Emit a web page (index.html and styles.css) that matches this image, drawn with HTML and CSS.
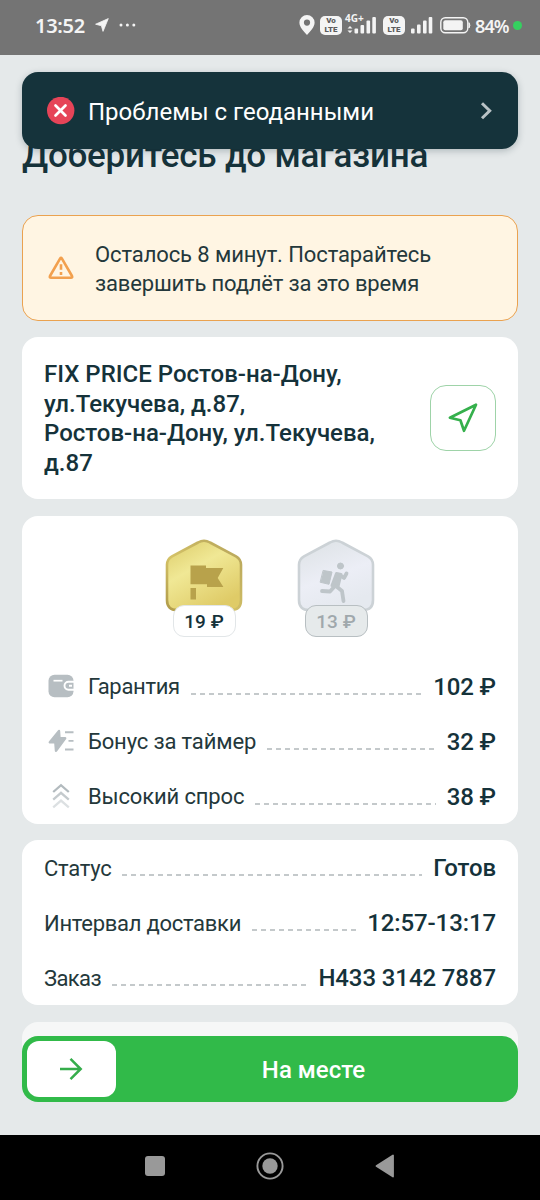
FILE: index.html
```html
<!DOCTYPE html>
<html lang="ru">
<head>
<meta charset="utf-8">
<title>Доберитесь до магазина</title>
<link rel="stylesheet" href="styles.css">
</head>
<body>
<div class="screen">
  <header class="status">
    <span class="clock">13:52</span>
    <svg class="nav-arrow" width="14" height="14" viewBox="0 0 14 14"><path d="M13.3.6.6 6.2l5.8 1.6L8 13.4z" fill="#f4f4f4" stroke="#f4f4f4" stroke-width=".8" stroke-linejoin="round"/></svg>
    <svg class="dots" width="17" height="4" viewBox="0 0 17 4" fill="#f4f4f4"><circle cx="2" cy="2" r="1.5"/><circle cx="8.4" cy="2" r="1.5"/><circle cx="14.8" cy="2" r="1.5"/></svg>
    <div class="status-icons">
      <svg width="16" height="20" viewBox="0 0 16 20"><path fill="#f4f4f4" fill-rule="evenodd" d="M8 0a7.6 7.6 0 0 1 7.6 7.6C15.6 12 11.500 16.500 8 20 4.500 16.500.4 12 .4 7.600A7.600 7.600 0 0 1 8 0zm0 4.500a3.100 3.100 0 1 0 0 6.200 3.100 3.100 0 0 0 0-6.200z"/></svg>
      <span class="volte first"><span>Vo</span><span>LTE</span></span>
      <span class="lte4g"><span class="g4">4G+</span>
        <svg width="32" height="20" viewBox="0 0 32 20" fill="#f4f4f4"><path d="M2.500 13.500 5 11l2.500 2.500zM2.500 15.500h5L5 18z"/><rect x="9.500" y="13.500" width="3.600" height="5" rx="1"/><rect x="15.500" y="10" width="3.600" height="8.500" rx="1"/><rect x="21.500" y="5.500" width="3.600" height="13" rx="1"/><rect x="27.300" y="2" width="3.600" height="16.500" rx="1"/></svg>
      </span>
      <span class="volte second"><span>Vo</span><span>LTE</span></span>
      <svg class="bars" width="22" height="20" viewBox="0 0 22 20" fill="#f4f4f4"><rect x="0" y="13.500" width="3.600" height="5" rx="1"/><rect x="6" y="9.500" width="3.600" height="9" rx="1"/><rect x="12" y="5.500" width="3.600" height="13" rx="1"/><rect x="17.700" y="2" width="3.600" height="16.500" rx="1"/></svg>
      <svg class="battery" width="31" height="17" viewBox="0 0 31 17"><rect x=".8" y=".8" width="27" height="15" rx="4.500" fill="none" stroke="#f4f4f4" stroke-width="1.400"/><rect x="3.300" y="3.300" width="19.500" height="10" rx="2" fill="#f4f4f4"/><path d="M29 5.700q1.800 2.600 0 5.200z" fill="#f4f4f4" stroke="#f4f4f4"/></svg>
      <span class="percent">84%</span>
      <span class="live"></span>
    </div>
  </header>

  <div class="toast">
    <svg width="28" height="28" viewBox="0 0 28 28"><circle cx="13.700" cy="13.500" r="13.700" fill="#e64458"/><path d="m8.500 8.500 10 10M18.500 8.500l-10 10" stroke="#fff" stroke-width="2.700" stroke-linecap="round"/></svg>
    <span class="toast-text">Проблемы с геоданными</span>
    <svg class="chevron" width="12" height="18" viewBox="0 0 12 18"><path d="m2 1.300 7.700 7.500L2 16.300" fill="none" stroke="#b9c3c6" stroke-width="3"/></svg>
  </div>

  <main class="content">
    <h1 class="title">Доберитесь до магазина</h1>

    <section class="warning">
      <svg width="28" height="26" viewBox="0 0 28 26"><path d="M14.800 3.400 25 21q.8 1.700-1.100 1.700H4.100Q2.200 22.700 3 21L13.200 3.400q.8-1.300 1.600 0z" fill="none" stroke="#f2a04e" stroke-width="2.600" stroke-linejoin="round"/><path d="M14 9.300v5.500M14 16.900v3" stroke="#f2a04e" stroke-width="2.600"/></svg>
      <p class="warning-text"><span class="w1">Осталось 8 минут. Постарайтесь</span><br><span class="w2">завершить подлёт за это время</span></p>
    </section>

    <section class="card address">
      <p class="address-text">FIX PRICE Ростов-на-Дону,<br>ул.Текучева, д.87,<br>Ростов-на-Дону, ул.Текучева,<br>д.87</p>
      <div class="route">
        <svg width="32" height="32" viewBox="0 0 32 32"><path d="M29 2.700 2.900 15.700l10.500 2.600 3.600 10.500z" fill="none" stroke="#35b04c" stroke-width="2.700" stroke-linejoin="round"/></svg>
      </div>
    </section>

    <section class="card pay">
      <div class="badges">
        <div class="badge">
          <svg width="78" height="74" viewBox="0 0 78 74">
            <defs><linearGradient id="gold" x1="0" y1="0" x2=".6" y2="1"><stop offset="0" stop-color="#dccb68"/><stop offset=".45" stop-color="#f0e895"/><stop offset="1" stop-color="#dfcb67"/></linearGradient>
            <linearGradient id="goldEdge" x1="0" y1="1" x2="1" y2="0"><stop offset="0" stop-color="#b09b4a"/><stop offset=".4" stop-color="#d4c267"/><stop offset="1" stop-color="#b5a35a"/></linearGradient></defs>
            <path d="M33 3.500q6-3.500 12 0L71 17.300q5 2.900 5 8.500V61q0 10-10 10H12Q2 71 2 61V25.800q0-5.600 5-8.500z" fill="url(#gold)" stroke="url(#goldEdge)" stroke-width="2.600"/>
            <path d="M25.500 26.500h15.500v2.500h17.300l-5.600 10 5.700 9H42v-2.700H25.500zM25.500 49h5.500v11.500h-5.500z" fill="#b8a24b"/>
          </svg>
          <span class="price">19 ₽</span>
        </div>
        <div class="badge">
          <svg width="78" height="74" viewBox="0 0 78 74">
            <defs><linearGradient id="silver" x1="0" y1="0" x2=".4" y2="1"><stop offset="0" stop-color="#dce1e4"/><stop offset=".6" stop-color="#eceef6"/><stop offset="1" stop-color="#e5e9ef"/></linearGradient></defs>
            <path d="M33 3.500q6-3.500 12 0L71 17.300q5 2.900 5 8.500V61q0 10-10 10H12Q2 71 2 61V25.800q0-5.600 5-8.500z" fill="url(#silver)" stroke="#ccd2d6" stroke-width="2.600"/>
            <g fill="#bec5c9" stroke="#bec5c9" stroke-linejoin="round" stroke-linecap="round"><path d="m26.500 31.500 8.500 1.500-3 12.300-8.500-2z"/><circle cx="43.500" cy="27" r="3"/><path d="m39.500 34.500 4.500 1-3 12-6-1z" stroke-width="3"/><path d="m43.500 36.500 3.500 2.500 2.500-4.500M37.500 47.500l-4.500 5-8-.5M39.500 47.500l5.500 4.500 1.500 10" fill="none" stroke-width="3.800"/></g>
          </svg>
          <span class="price muted">13 ₽</span>
        </div>
      </div>
      <div class="row">
        <span class="icon"><svg width="26" height="24" viewBox="0 0 26 24"><rect x=".5" y=".7" width="25" height="22.600" rx="6" fill="#b7bec2"/><path d="M5.500 6.700h9" stroke="#fff" stroke-width="1.700"/><path d="M26 7.800h-5.500a4 4 0 0 0 0 8H26M21 11.800h3" fill="none" stroke="#fff" stroke-width="1.900"/></svg></span>
        <span class="label l1">Гарантия</span><span class="leader"></span><span class="value">102 ₽</span>
      </div>
      <div class="row">
        <span class="icon"><svg width="26" height="24" viewBox="0 0 26 24"><path d="M11 2 1.800 13.200h5.500L8 21.800l9.200-12.600h-5.700z" fill="#b7bec2" stroke="#b7bec2" stroke-width="2.400" stroke-linejoin="round"/><path d="M17 3.300h8.500M20.500 11.900h5M17 20.500h8.500" stroke="#b7bec2" stroke-width="1.900"/></svg></span>
        <span class="label l2">Бонус за таймер</span><span class="leader"></span><span class="value">32 ₽</span>
      </div>
      <div class="row">
        <span class="icon"><svg width="26" height="26" viewBox="0 0 26 26" fill="none" stroke-width="2.300"><path d="m5.200 9 7.800-6.800L20.800 9" stroke="#b2babe"/><path d="M5.200 16.700 13 9.900l7.800 6.800" stroke="#c4cacd"/><path d="m5.200 24.400 7.800-6.800 7.800 6.800" stroke="#dce0e2"/></svg></span>
        <span class="label l3">Высокий спрос</span><span class="leader"></span><span class="value">38 ₽</span>
      </div>
    </section>

    <section class="card order">
      <div class="row"><span class="label l4">Статус</span><span class="leader"></span><span class="value">Готов</span></div>
      <div class="row"><span class="label l5">Интервал доставки</span><span class="leader"></span><span class="value">12:57-13:17</span></div>
      <div class="row"><span class="label l6">Заказ</span><span class="leader"></span><span class="value">Н433 3142 7887</span></div>
    </section>

    <section class="card next"></section>
  </main>

  <div class="slider">
    <div class="thumb"><svg width="24" height="24" viewBox="0 0 24 24"><path d="M1 12h20M11.500 1.800 21.700 12 11.500 22.200" fill="none" stroke="#35ad4b" stroke-width="2.500"/></svg></div>
    <span class="slider-text">На месте</span>
  </div>

  <footer class="navbar">
    <svg width="20" height="20" viewBox="0 0 20 20"><rect width="20" height="20" rx="3" fill="#999"/></svg>
    <svg width="28" height="28" viewBox="0 0 28 28"><circle cx="14" cy="14" r="12.600" fill="none" stroke="#999" stroke-width="1.900"/><circle cx="14" cy="14" r="7.700" fill="#999"/></svg>
    <svg width="20" height="24" viewBox="0 0 20 24"><path d="M18 1.500v21L1.500 12z" fill="#999" stroke="#999" stroke-width="1.800" stroke-linejoin="round"/></svg>
  </footer>
</div>
</body>
</html>
```
FILE: styles.css
```css
* { box-sizing: border-box; }
body { margin: 0; font-family: Roboto, "Noto Sans", sans-serif; color: #15323a; }
p, h1 { margin: 0; }
svg { display: block; flex: none; }
.screen { position: relative; display: flex; flex-direction: column; width: 540px; height: 1200px; overflow: hidden; background: #e5e9ea; }

.status { flex: none; display: flex; align-items: center; height: 55px; padding: 0 18px 5px 35px; background: #747474; color: #f4f4f4; }
.clock { width: 51px; padding-top: 1px; font: 600 20px/24px "Noto Sans", sans-serif; letter-spacing: -0.3px; }
.nav-arrow { margin-left: 9px; }
.dots { margin-left: 10px; }
.status-icons { display: flex; align-items: center; margin-left: auto; }
.volte { display: flex; flex-direction: column; align-items: center; justify-content: center; width: 22px; height: 19px; border-radius: 5px; background: #f4f4f4; color: #5c5c5c; font: 900 8px/9px Roboto, sans-serif; }
.volte.first { margin-left: 5px; }
.volte.second { margin-left: 6px; }
.lte4g { position: relative; margin-left: 3px; }
.g4 { position: absolute; left: 0; top: -2px; font: 700 10px/10px "Noto Sans", sans-serif; }
.bars { margin-left: 6px; }
.battery { margin-left: 7px; }
.percent { width: 35px; margin-left: 4px; padding-top: 1px; font: 600 18px/24px "Noto Sans", sans-serif; letter-spacing: -0.9px; white-space: nowrap; }
.live { width: 9px; height: 9px; margin-left: 3px; border-radius: 50%; background: #35d05f; }

.toast { position: absolute; z-index: 2; left: 22px; top: 72px; display: flex; align-items: center; width: 496px; height: 77px; padding: 0 26px 0 25px; border-radius: 16px; background: #15333b; box-shadow: 0 2px 7px rgba(20, 45, 52, 0.25); }
.toast-text { margin-left: 13px; padding-top: 2px; font-size: 24px; line-height: 30px; color: #fff; white-space: nowrap; }
.chevron { margin-left: auto; }

.content { flex: 1; display: flex; flex-direction: column; padding: 79px 22px 0; min-height: 0; }
.title { height: 81px; font-size: 35px; line-height: 44px; font-weight: 500; letter-spacing: -0.22px; white-space: nowrap; }

.warning { flex: none; display: flex; align-items: center; height: 106px; padding: 0 24px; border: 1.5px solid #eaa250; border-radius: 16px; background: #fff5e3; }
.warning-text { margin-left: 20px; padding-top: 2px; font-size: 22px; line-height: 29.500px; color: #24383b; white-space: nowrap; }
.w1 { letter-spacing: -0.1px; }
.w2 { letter-spacing: -0.17px; }

.card { flex: none; margin-top: 16.400px; border-radius: 16px; background: #fff; }
.address { display: flex; align-items: center; justify-content: space-between; height: 162px; padding: 0 22px; }
.address-text { padding-top: 2px; font-size: 24px; line-height: 29.700px; font-weight: 500; white-space: nowrap; }
.route { display: flex; align-items: center; justify-content: center; width: 66px; height: 66px; border: 1px solid #9ed3a8; border-radius: 16px; }

.pay { height: 308px; padding: 23px 22px 0; }
.badges { display: flex; justify-content: center; gap: 54px; height: 120px; }
.badge { display: flex; flex-direction: column; align-items: center; width: 78px; }
.price { position: relative; width: 63px; height: 32px; margin-top: -8px; border: 1px solid #e2e6e8; border-radius: 11px; background: #fff; font-size: 19px; line-height: 31px; font-weight: 500; text-align: center; }
.price.muted { border-color: #b8bfc2; background: #e6eaeb; color: #a0a8ac; }
.row { display: flex; align-items: center; height: 55px; }
.icon { display: flex; justify-content: flex-start; width: 34px; margin-right: 10px; padding-left: 3.600px; }
.label { padding-top: 2px; font-size: 22px; line-height: 30px; color: #24383b; white-space: nowrap; }
.l1 { letter-spacing: -0.3px; }
.l2, .l3 { letter-spacing: -0.15px; }
.l4, .l5 { letter-spacing: -0.27px; }
.l6 { letter-spacing: -0.6px; }
.leader { flex: 1; height: 1.600px; margin: 15px 11px 0; background: repeating-linear-gradient(90deg, #c4c9cb 0 5px, transparent 5px 9px); }
.value { padding-top: 1px; font-size: 24px; line-height: 30px; font-weight: 500; letter-spacing: -0.1px; white-space: nowrap; }
.order { height: 165px; padding: 0 22px; }
.next { height: 50px; background: #f6f7f7; }

.slider { position: absolute; z-index: 2; left: 22px; top: 1036px; display: flex; align-items: center; width: 496px; height: 66px; padding: 0 5px; border-radius: 16px; background: #31ba49; }
.thumb { display: flex; align-items: center; justify-content: center; width: 89px; height: 56px; padding-right: 2px; border-radius: 12px; background: #fff; }
.slider-text { flex: 1; padding: 1px 2px 0 0; text-align: center; color: #fff; font-size: 24px; font-weight: 500; }
.navbar { position: relative; z-index: 1; flex: none; display: flex; align-items: center; justify-content: center; gap: 91px; height: 65px; padding-bottom: 4px; background: #000; }
```
